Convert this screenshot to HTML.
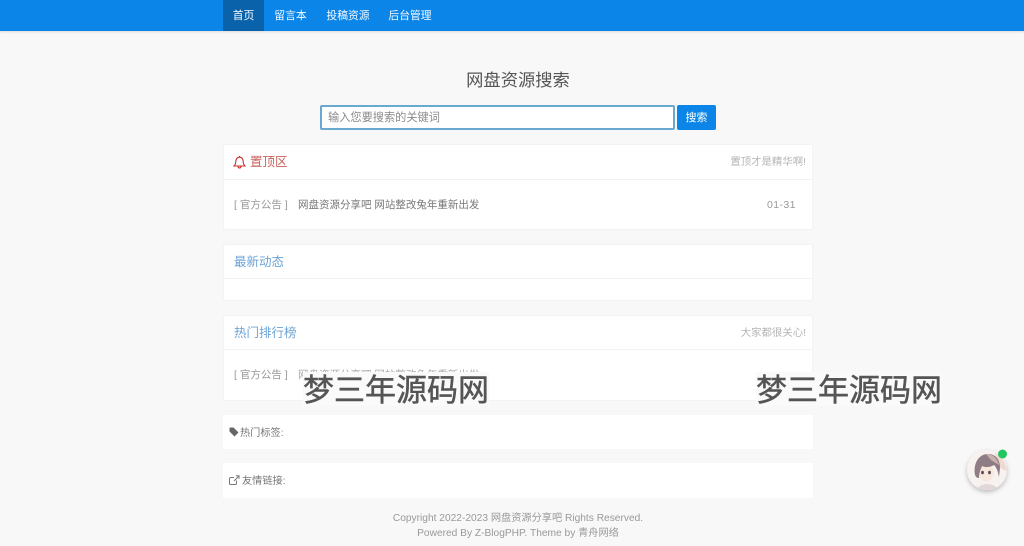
<!DOCTYPE html>
<html lang="zh"><head><meta charset="utf-8"><title>网盘资源搜索</title>
<style>
*{box-sizing:border-box}
html,body{margin:0;padding:0}
body{width:1024px;height:546px;position:relative;overflow:hidden;background:#f8f8f8;font-family:"Liberation Sans","Noto Sans CJK SC",sans-serif;color:#666}
#w{position:absolute;left:0;top:0;width:1024px;height:546px;filter:blur(.35px)}
.a{position:absolute;white-space:nowrap}
.nav{left:0;top:0;width:1024px;height:31px;background:#0c85e9;box-shadow:0 1px 2px rgba(0,0,0,.12)}
.nl{top:1px;height:31px;line-height:31px;color:#f4faff;font-size:10.8px;text-align:center}
.card{background:#fff;left:223px;width:590px;border:1px solid #f3f3f3;border-radius:2px}
.line{left:223px;width:590px;height:1px;background:#f3f3f3}
.t{font-size:12.5px;line-height:18px;color:#6ba3d6}
.r{font-size:10.4px;line-height:16px;color:#b5b5b5;right:218px}
.g{font-size:10.5px;line-height:16px;color:#999}
.i{font-size:10.5px;line-height:16px;color:#777}
.wm{font-size:31px;line-height:33px;height:34px;color:#555;background:#fafafa;width:186px;padding-top:1px;-webkit-text-stroke:.5px #555}
</style></head><body><div id="w">
<div class="a nav"></div>
<div class="a" style="left:223px;top:0;width:41px;height:31px;background:#0a62ab"></div>
<div class="a nl" style="left:223px;width:41px">首页</div>
<div class="a nl" style="left:264px;width:53px">留言本</div>
<div class="a nl" style="left:317px;width:62px">投稿资源</div>
<div class="a nl" style="left:379px;width:62px">后台管理</div>

<div class="a" style="left:223px;width:590px;top:68px;text-align:center;font-size:17.3px;line-height:24px;color:#555">网盘资源搜索</div>
<div class="a" style="left:320px;top:105px;width:355px;height:25px;background:#fff;border:2px solid #6aa9cf;border-radius:2px;font-size:11.2px;line-height:23px;color:#8a8a8a;padding-left:6px">输入您要搜索的关键词</div>
<div class="a" style="left:677px;top:105px;width:39px;height:25px;background:#0c85e9;border-radius:2px;color:#fff;font-size:11px;line-height:26px;text-align:center">搜索</div>

<div class="a card" style="top:144px;height:86px"></div>
<div class="a line" style="top:179px"></div>
<svg class="a" style="left:233px;top:155px" width="13" height="14" viewBox="0 0 13 14" fill="none" stroke="#c9302c" stroke-width="1.1"><path d="M1 11h11c-1.3-1.2-1.7-2.5-1.8-4.5C10 4 9 2.2 6.5 2.2S3 4 2.8 6.500C2.700 8.500 2.300 9.800 1 11zM6.500 1v1.200M5 11.500c.2 1 .8 1.500 1.500 1.500s1.300-.5 1.500-1.500"/></svg>
<div class="a t" style="left:250px;top:153px;color:#c9605c">置顶区</div>
<div class="a r" style="top:155px">置顶才是精华啊!</div>
<div class="a g" style="left:234px;top:197px">[ 官方公告 ]</div>
<div class="a i" style="left:298px;top:197px">网盘资源分享吧 网站整改兔年重新出发</div>
<div class="a g" style="left:767px;top:197px;letter-spacing:.4px">01-31</div>

<div class="a card" style="top:244px;height:57px"></div>
<div class="a line" style="top:278px"></div>
<div class="a t" style="left:234px;top:253px">最新动态</div>

<div class="a card" style="top:315px;height:86px"></div>
<div class="a line" style="top:349px"></div>
<div class="a t" style="left:234px;top:324px">热门排行榜</div>
<div class="a r" style="top:326px">大家都很关心!</div>
<div class="a g" style="left:234px;top:367px">[ 官方公告 ]</div>
<div class="a i" style="left:298px;top:367px;color:#aaa">网盘资源分享吧 网站整改兔年重新出发</div>

<div class="a" style="left:223px;top:415px;width:590px;height:34px;background:#fff"></div>
<svg class="a" style="left:229px;top:427px" width="10" height="10" viewBox="0 0 10 10"><path d="M.5 1v3.500L5.500 9.500 9.500 5.500 4.500.5H1z" fill="#666"/></svg>
<div class="a i" style="left:240px;top:426px;font-size:10.2px">热门标签:</div>

<div class="a" style="left:223px;top:463px;width:590px;height:35px;background:#fff"></div>
<svg class="a" style="left:229px;top:475px" width="11" height="10" viewBox="0 0 11 10" fill="none" stroke="#777" stroke-width="1"><path d="M7.500 5.500V8.500a1 1 0 0 1-1 1H1.500a1 1 0 0 1-1-1V3.500a1 1 0 0 1 1-1H5M5 6l4.500-4.500M7 .8h3v3"/></svg>
<div class="a i" style="left:242px;top:474px;font-size:10.2px">友情链接:</div>

<div class="a" style="left:223px;width:590px;top:511px;text-align:center;font-size:10.2px;line-height:15px;color:#999">Copyright 2022-2023 网盘资源分享吧 Rights Reserved.<br>Powered By Z-BlogPHP. Theme by 青舟网络</div>

<div class="a wm" style="left:303px;top:372px;padding-top:2px">梦三年源码网</div>
<div class="a wm" style="left:756px;top:372px;padding-top:2px">梦三年源码网</div>

<svg class="a" style="left:962px;top:445px" width="50" height="52" viewBox="0 0 50 52">
<defs><clipPath id="c"><circle cx="25" cy="25" r="20"/></clipPath><filter id="s" x="-30%" y="-30%" width="160%" height="160%"><feDropShadow dx="0" dy="2" stdDeviation="2.500" flood-color="#000" flood-opacity=".25"/></filter></defs>
<circle cx="25" cy="25" r="20" fill="#f7f1ef" filter="url(#s)"/>
<g clip-path="url(#c)">
<path d="M33 8c6 3 11 9 12 18l-9-4z" fill="#f0d9d3"/>
<path d="M14 46c2-5 7-7 11-7s10 2 12 7z" fill="#e2d6d8"/>
<ellipse cx="24" cy="27" rx="7.500" ry="9.500" fill="#f7e7dd"/>
<path d="M13 30c-2-12 4-21 13-21 8 0 12 6 12 14l-1 9c-1-5-2-9-5-12-3 2-8 3-12 1-1 3-3 6-3 12-2 0-3-1-4-3z" fill="#8f7c84"/>
<path d="M24 9c7 0 11 4 13 11l-8-5z" fill="#c9b2ae"/>
<ellipse cx="20.500" cy="27.500" rx="1.400" ry="1.800" fill="#5a4650"/><ellipse cx="27.500" cy="27.500" rx="1.400" ry="1.800" fill="#5a4650"/>
</g>
<circle cx="40.500" cy="9" r="4.500" fill="#22c55e"/>
</svg>
</div></body></html>
